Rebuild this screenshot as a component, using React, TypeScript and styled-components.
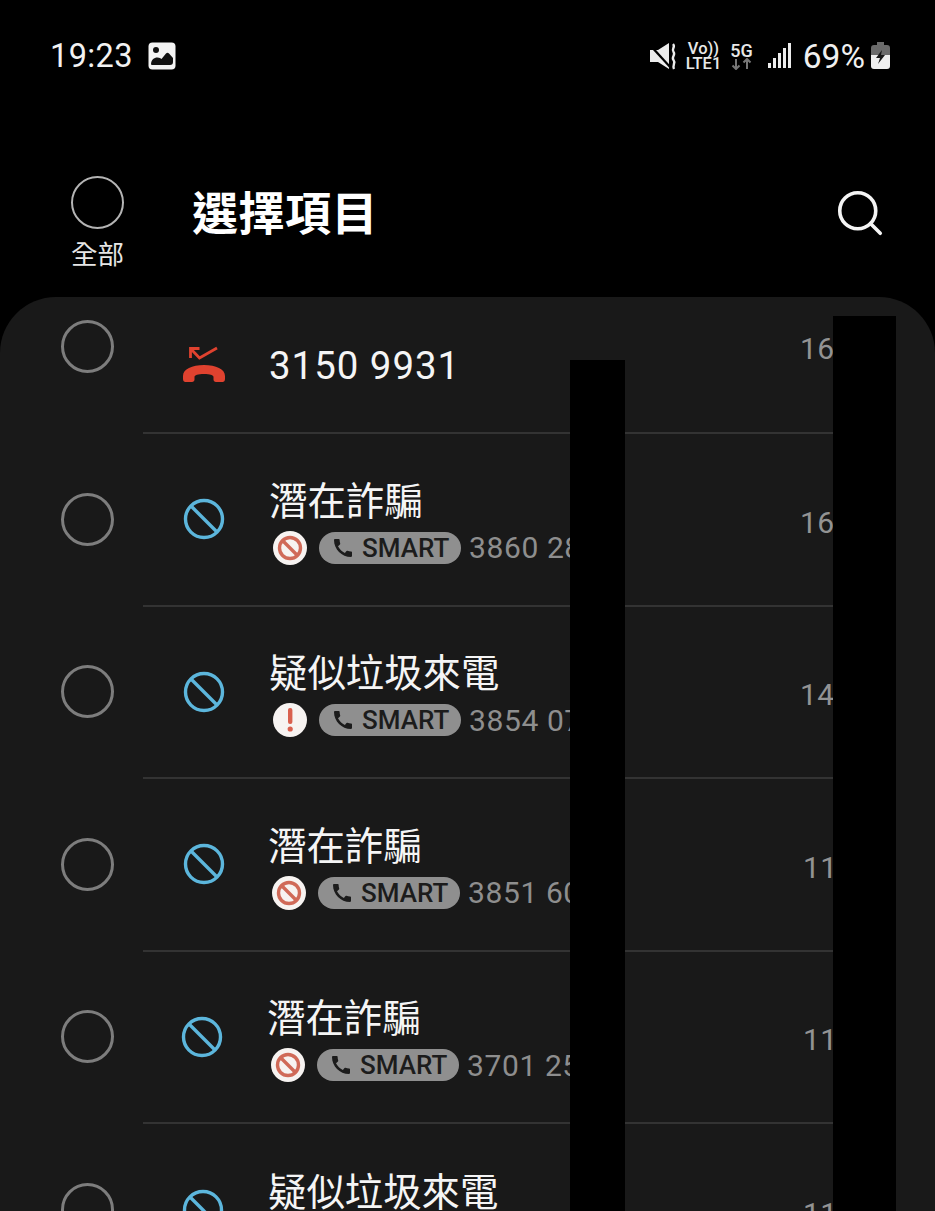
import React from "react";
import styled, { createGlobalStyle } from "styled-components";
import { MdCall } from "react-icons/md";
import { Search } from "lucide-react";

const GlobalStyle = createGlobalStyle`
  html, body {
    margin: 0;
    padding: 0;
    background: #000;
    font-family: Roboto, "Noto Sans CJK TC", sans-serif;
  }
`;

const Page = styled.div`
  position: relative;
  width: 935px;
  height: 1211px;
  overflow: hidden;
  background: #000;
  color: #fff;
`;

const StatusBar = styled.div`
  display: flex;
  align-items: center;
  height: 28px;
  padding: 42px 45px 0 50px;
`;

const Clock = styled.span`
  font-size: 32.5px;
  letter-spacing: 0.4px;
  color: #f2f2f2;
  margin-right: 15px;
`;

const StatusRight = styled.div`
  margin-left: auto;
  display: flex;
  align-items: center;
`;

const NetStack = styled.div<{ $gap: number; $size: number }>`
  display: flex;
  flex-direction: column;
  align-items: center;
  margin-left: ${props => props.$gap}px;
  font-size: ${props => props.$size}px;
  font-weight: 500;
  line-height: 15px;
  color: #e8e8e8;
`;

const Percent = styled.span`
  font-size: 33.5px;
  color: #f0f0f0;
  margin: 0 6px 0 11px;
`;

const Header = styled.header`
  display: flex;
  align-items: flex-start;
  height: 156px;
  padding: 35px 48px 0 71px;
  box-sizing: border-box;
  margin-top: 71px;
`;

const AllCheck = styled.div`
  display: flex;
  flex-direction: column;
  align-items: center;
  width: 53px;
`;

const AllCircle = styled.div`
  width: 53px;
  height: 53px;
  box-sizing: border-box;
  border: 2px solid #b4b4b4;
  border-radius: 50%;
`;

const AllLabel = styled.span`
  font-size: 26.5px;
  line-height: 30px;
  margin-top: 11px;
  white-space: nowrap;
  color: #e6e6e6;
`;

const Title = styled.h1`
  margin: 10px 0 0 68px;
  font-size: 46px;
  line-height: 56px;
  font-weight: 700;
  letter-spacing: 0.5px;
`;

const SearchButton = styled.div`
  margin: 10px 0 0 auto;
  color: #f4f4f4;
  line-height: 0;
`;

const Panel = styled.main`
  background: #191919;
  border-radius: 56px 56px 0 0;
  height: 960px;
`;

const Row = styled.div<{ $first?: boolean }>`
  display: flex;
  height: ${props => (props.$first ? 137 : 172.5)}px;
  box-sizing: border-box;
`;

const CheckCol = styled.div<{ $first?: boolean }>`
  width: 143px;
  flex: none;
  display: flex;
  align-items: ${props => (props.$first ? "flex-start" : "center")};
  padding: ${props => (props.$first ? "23px 0 0 61px" : "0 0 2px 61px")};
  box-sizing: border-box;
`;

const Circle = styled.div`
  width: 53px;
  height: 53px;
  box-sizing: border-box;
  border: 3px solid #7d7d7d;
  border-radius: 50%;
`;

const Body = styled.div<{ $last?: boolean }>`
  flex: 1;
  display: flex;
  align-items: center;
  margin-right: 39px;
  border-bottom: ${props => (props.$last ? "none" : "2px solid #333")};
  min-width: 0;
`;

const TypeCol = styled.div<{ $nudge?: number; $raise?: number }>`
  width: 127px;
  flex: none;
  box-sizing: border-box;
  padding-left: ${props => 40 + (props.$nudge || 0)}px;
  margin-top: ${props => -(props.$raise || 0)}px;
  line-height: 0;
`;

const Info = styled.div<{ $nudge?: number }>`
  flex: 1;
  min-width: 0;
  margin-left: ${props => props.$nudge || 0}px;
  margin-top: 6px;
`;

const Name = styled.div`
  font-size: 38.4px;
  line-height: 46px;
  color: #f5f5f5;
  white-space: nowrap;
  margin-left: -1px;
`;

const Sub = styled.div`
  display: flex;
  align-items: center;
  margin: 5px 0 0 3px;
  height: 36px;
`;

const Mark = styled.div`
  width: 34px;
  height: 34px;
  flex: none;
  border-radius: 50%;
  background: #f7f3f1;
  display: flex;
  align-items: center;
  justify-content: center;
  margin-right: 12px;
`;

const Badge = styled.div`
  display: flex;
  align-items: center;
  width: 142px;
  height: 32px;
  flex: none;
  box-sizing: border-box;
  padding-left: 12px;
  border-radius: 16px;
  background: #8f8f8f;
  color: #1c1c1c;
  font-size: 26px;
  font-weight: 500;
  margin-right: 8px;
`;

const BadgeText = styled.span`
  margin-left: 7px;
`;

const NumberText = styled.span`
  font-size: 30px;
  letter-spacing: 0.6px;
  color: #8e8e8e;
  white-space: nowrap;
`;

const FirstNumber = styled.div`
  font-size: 38.4px;
  letter-spacing: 1px;
  line-height: 46px;
  color: #f5f5f5;
  margin: 46px 0 0 -1px;
  align-self: flex-start;
`;

const Time = styled.span<{ $left: number; $offset: number }>`
  width: ${props => 896 - props.$left}px;
  flex: none;
  font-size: 30px;
  letter-spacing: 0.5px;
  color: #939393;
  overflow: hidden;
  margin-top: ${props => props.$offset}px;
`;

const Redaction = styled.div<{ $left: number; $top: number; $width: number }>`
  position: absolute;
  left: ${props => props.$left}px;
  top: ${props => props.$top}px;
  width: ${props => props.$width}px;
  bottom: 0;
  background: #000;
`;

const ImageIcon = () => (
  <svg width="28" height="28" viewBox="0 0 28 28">
    <rect x="0.5" y="0.5" width="27" height="27" rx="4" fill="#f4f4f4" />
    <circle cx="8" cy="8" r="3" fill="#111" />
    <path d="M3 22.5 C3 18 6 15.5 9.5 15.5 C11.5 15.5 12.5 16.5 13.5 17 L18 11.5 C19 10.5 20 10.5 21 11.5 L25 16 V20 C25 22 24 23 22 23 H4 Z" fill="#111" />
  </svg>
);

const MuteIcon = () => (
  <svg width="27" height="27" viewBox="0 0 27 27" style={{ display: "block" }}>
    <path d="M0 7 H8 L19 0 V26 L8 19 H0 Z" fill="#ececec" />
    <path d="M0 2 L21 25" stroke="#000" strokeWidth="2.2" />
    <path d="M23 1 C26 4 21 6 23.5 9 C26 12 21 14 23.5 17 C26 20 22 22 24 26" fill="none" stroke="#ececec" strokeWidth="2.4" />
  </svg>
);

const SignalIcon = () => (
  <svg width="24" height="26" viewBox="0 0 24 26" style={{ marginLeft: 15, display: "block" }}>
    <rect x="0" y="20" width="3" height="5" fill="#ececec" />
    <rect x="5" y="15" width="3" height="10" fill="#ececec" />
    <rect x="10" y="10" width="3" height="15" fill="#ececec" />
    <rect x="15" y="5" width="3" height="20" fill="#ececec" />
    <rect x="20" y="0" width="3" height="25" fill="#ececec" />
  </svg>
);

const BatteryIcon = () => (
  <svg width="19" height="28" viewBox="0 0 19 28" style={{ display: "block" }}>
    <path d="M6 0 H13 V3 H16 C18 3 19 4 19 6 V14 H0 V6 C0 4 1 3 3 3 H6 Z" fill="#6a6a6a" />
    <path d="M0 13 H19 V24 C19 26 18 27 16 27 H3 C1 27 0 26 0 24 Z" fill="#eeeeee" />
    <path d="M11 8 L5 16 H9 L7 22 L14 13 H10 Z" fill="#161616" />
  </svg>
);

const ArrowPair = () => (
  <svg width="21" height="12" viewBox="0 0 21 12" style={{ display: "block" }}>
    <path d="M5 1 V11 M1.5 7.5 L5 11 L8.5 7.5 M16 11 V1 M12.5 4.5 L16 1 L19.5 4.5" fill="none" stroke="#777" strokeWidth="2" />
  </svg>
);

const MissedIcon = () => (
  <svg width="42" height="40" viewBox="0 0 42 40">
    <path d="M7.5 14 V4.5 H16.5 M7.5 4.5 L16.5 14 L34 4" fill="none" stroke="#e0422f" strokeWidth="2.8" />
    <path d="M0 32 C0 25 9 21 21 21 S42 25 42 32 V35 C42 37 41 38 39.5 38 H33 C31.5 38 30.5 37 30.5 35.5 V33 C30.5 31 27 30 21 30 S11.5 31 11.5 33 V35.5 C11.5 37 10.5 38 9 38 H2.5 C1 38 0 37 0 35 Z" fill="#e0422f" />
  </svg>
);

const BlockIcon = () => (
  <svg width="42" height="42" viewBox="0 0 42 42">
    <circle cx="21" cy="21" r="18.5" fill="none" stroke="#5cb6dc" strokeWidth="3.4" />
    <path d="M8 8 L34 34" stroke="#5cb6dc" strokeWidth="3.4" />
  </svg>
);

const ForbidMark = () => (
  <svg width="26" height="26" viewBox="0 0 26 26">
    <circle cx="13" cy="13" r="10.5" fill="none" stroke="#d06a58" strokeWidth="3.4" />
    <path d="M6 6 L20 20" stroke="#d06a58" strokeWidth="3.4" />
  </svg>
);

const AlertMark = () => (
  <svg width="26" height="26" viewBox="0 0 26 26">
    <rect x="11" y="1" width="4.4" height="16" rx="2" fill="#d9604e" />
    <circle cx="13.2" cy="22" r="2.6" fill="#d9604e" />
  </svg>
);

interface CallRowProps {
  name: string;
  number: string;
  time: string;
  timeLeft: number;
  alert?: boolean;
  iconNudge?: number;
  textNudge?: number;
  last?: boolean;
}

const CallRow: React.FC<CallRowProps> = props => {
  return (
    <Row>
      <CheckCol>
        <Circle />
      </CheckCol>
      <Body $last={props.last}>
        <TypeCol $nudge={props.iconNudge}>
          <BlockIcon />
        </TypeCol>
        <Info $nudge={props.textNudge}>
          <Name>{props.name}</Name>
          <Sub>
            <Mark>{props.alert ? <AlertMark /> : <ForbidMark />}</Mark>
            <Badge>
              <MdCall size={24} />
              <BadgeText>SMART</BadgeText>
            </Badge>
            <NumberText>{props.number}</NumberText>
          </Sub>
        </Info>
        <Time $left={props.timeLeft} $offset={6}>{props.time}</Time>
      </Body>
    </Row>
  );
};

export default function App() {
  return (
    <Page>
      <GlobalStyle />
      <StatusBar>
        <Clock>19:23</Clock>
        <ImageIcon />
        <StatusRight>
          <MuteIcon />
          <NetStack $gap={9} $size={16.5}>
            <span>Vo))</span>
            <span>LTE1</span>
          </NetStack>
          <NetStack $gap={9} $size={18}>
            <span>5G</span>
            <ArrowPair />
          </NetStack>
          <SignalIcon />
          <Percent>69%</Percent>
          <BatteryIcon />
        </StatusRight>
      </StatusBar>
      <Header>
        <AllCheck>
          <AllCircle />
          <AllLabel>全部</AllLabel>
        </AllCheck>
        <Title>選擇項目</Title>
        <SearchButton>
          <Search size={54} strokeWidth={1.6} />
        </SearchButton>
      </Header>
      <Panel>
        <Row $first>
          <CheckCol $first>
            <Circle />
          </CheckCol>
          <Body>
            <TypeCol $raise={2}>
              <MissedIcon />
            </TypeCol>
            <FirstNumber>3150 9931</FirstNumber>
            <Info />
            <Time $left={800} $offset={-32}>16</Time>
          </Body>
        </Row>
        <CallRow name="潛在詐騙" number="3860 28" time="16" timeLeft={800} />
        <CallRow name="疑似垃圾來電" number="3854 07" time="14" timeLeft={800} alert />
        <CallRow name="潛在詐騙" number="3851 60" time="11" timeLeft={803} textNudge={-1} />
        <CallRow name="潛在詐騙" number="3701 25" time="11" timeLeft={803} iconNudge={-2} textNudge={-2} />
        <CallRow name="疑似垃圾來電" number="" time="11" timeLeft={803} iconNudge={-1} textNudge={-1} last />
      </Panel>
      <Redaction $left={570} $top={360} $width={55} />
      <Redaction $left={833} $top={316} $width={63} />
    </Page>
  );
}
